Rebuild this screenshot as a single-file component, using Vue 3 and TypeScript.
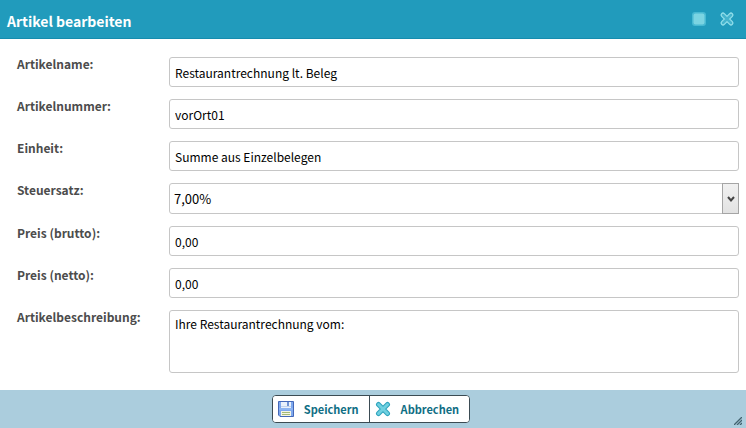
<script setup lang="ts">
import { ref } from 'vue'

interface Field {
  id: string
  label: string
  value: string
  kind: 'text' | 'select' | 'area'
}

const fields = ref<Field[]>([
  { id: 'name', label: 'Artikelname:', value: 'Restaurantrechnung lt. Beleg', kind: 'text' },
  { id: 'nummer', label: 'Artikelnummer:', value: 'vorOrt01', kind: 'text' },
  { id: 'einheit', label: 'Einheit:', value: 'Summe aus Einzelbelegen', kind: 'text' },
  { id: 'steuersatz', label: 'Steuersatz:', value: '7,00%', kind: 'select' },
  { id: 'brutto', label: 'Preis (brutto):', value: '0,00', kind: 'text' },
  { id: 'netto', label: 'Preis (netto):', value: '0,00', kind: 'text' },
  { id: 'beschreibung', label: 'Artikelbeschreibung:', value: 'Ihre Restaurantrechnung vom:', kind: 'area' },
])
</script>

<template>
  <form class="dialog" @submit.prevent>
    <header class="titlebar">
      <h1 class="title">Artikel bearbeiten</h1>
      <button type="button" class="tool" aria-label="Maximieren">
        <svg width="16" height="16" viewBox="0 0 16 16">
          <rect x="1" y="1" width="14" height="14" rx="3" fill="#48b9d2" />
          <rect x="2.5" y="2.5" width="11" height="11" rx="2" fill="#7bd4e2" />
        </svg>
      </button>
      <button type="button" class="tool" aria-label="Schließen">
        <svg width="16" height="16" viewBox="0 0 16 16">
          <path d="M4 4L12 12M12 4L4 12" stroke="#93dfea" stroke-width="5" stroke-linecap="round" />
          <path d="M4 4L12 12M12 4L4 12" stroke="#45b3cd" stroke-width="2.5" stroke-linecap="round" />
        </svg>
      </button>
    </header>

    <main class="fields">
      <div v-for="field in fields" :key="field.id" class="row">
        <label class="label" :for="field.id">{{ field.label }}</label>
        <div v-if="field.kind === 'select'" class="picker">
          <select :id="field.id" v-model="field.value" class="control select">
            <option>7,00%</option>
          </select>
          <span class="arrow" aria-hidden="true">
            <svg width="8" height="8" viewBox="0 0 8 8">
              <path d="M1 2L4 5.5L7 2" fill="none" stroke="#444" stroke-width="2" />
            </svg>
          </span>
        </div>
        <textarea v-else-if="field.kind === 'area'" :id="field.id" v-model="field.value" class="control area"></textarea>
        <input v-else :id="field.id" v-model="field.value" type="text" class="control" />
      </div>
    </main>

    <footer class="footer">
      <div class="actions">
        <button type="submit" class="action">
          <svg width="16" height="16" viewBox="0 0 16 16">
            <path d="M.5 .5H15.5V15.5H2L.5 14Z" fill="#7ea8ee" stroke="#4468b8" />
            <rect x="3" y="1" width="10" height="6" fill="#e9f1fb" />
            <rect x="9" y="1" width="2" height="4" fill="#6f93d4" />
            <path d="M3 5.5H13" stroke="#c3d3ea" />
            <rect x="1" y="7" width="14" height="2" fill="#8cb4f2" />
            <rect x="3" y="10" width="10" height="5" fill="#f3f5e4" />
            <path d="M4 11.5H12M4 13.5H12" stroke="#a4ba78" />
          </svg>
          <span>Speichern</span>
        </button>
        <button type="button" class="action">
          <svg width="16" height="16" viewBox="0 0 16 16">
            <path d="M3.5 3.5L12.5 12.5M12.5 3.5L3.5 12.5" stroke="#2ea3bd" stroke-width="5" stroke-linecap="round" />
            <path d="M3.5 3.5L12.5 12.5M12.5 3.5L3.5 12.5" stroke="#6fd0e0" stroke-width="3" stroke-linecap="round" />
          </svg>
          <span>Abbrechen</span>
        </button>
      </div>
      <svg class="grip" width="8" height="8" viewBox="0 0 8 8" aria-hidden="true">
        <path d="M0 8L8 0M3 8L8 3M6 8L8 6" stroke="#42626f" stroke-width="1.3" />
      </svg>
    </footer>
  </form>
</template>

<style>
body {
  background: #fff;
}
</style>

<style scoped>
.dialog {
  display: flex;
  flex-direction: column;
  min-height: 100vh;
  font-family: "Noto Sans CJK SC", "Noto Sans", sans-serif;
  font-size: 12px;
  line-height: 18px;
}

.dialog * {
  box-sizing: border-box;
}

.titlebar {
  display: flex;
  align-items: center;
  gap: 12px;
  height: 39px;
  padding: 0 11px 0 7px;
  background: #219bbc;
  border-bottom: 1px solid #168cae;
}

.title {
  flex: 1;
  margin: 0;
  padding-top: 4px;
  color: #fff;
  font-size: 14px;
  font-weight: 700;
  line-height: 20px;
}

.tool {
  display: flex;
  padding: 0;
  border: 0;
  background: none;
}

.fields {
  display: flex;
  flex: 1;
  flex-direction: column;
  gap: 12px;
  padding: 18px 7px 16px 17px;
}

.row {
  display: flex;
  align-items: flex-start;
}

.label {
  flex: 0 0 152px;
  margin-top: -2px;
  color: #4c4c4c;
  font-weight: 700;
}

.control {
  display: block;
  flex: 1;
  min-width: 0;
  width: 100%;
  height: 30px;
  margin: 0;
  padding: 0 5px;
  border: 1px solid #c6c6c6;
  border-radius: 3px;
  background: #fff;
  color: #000;
  font: inherit;
}

.picker {
  position: relative;
  display: flex;
  flex: 1;
}

.select {
  height: 31px;
  padding: 0 4px;
  appearance: none;
  font-size: 13px;
}

.arrow {
  position: absolute;
  top: 0;
  right: 0;
  bottom: 0;
  display: flex;
  align-items: center;
  justify-content: center;
  width: 17px;
  border: 1px solid #a5a5a5;
  background: linear-gradient(#f1f1f1, #e2e2e2);
  pointer-events: none;
}

.area {
  height: 63px;
  padding: 4px 5px;
  resize: none;
}

.footer {
  position: relative;
  display: flex;
  justify-content: center;
  height: 38px;
  padding: 5px 8px 5px 4px;
  background: #abcddd;
}

.actions {
  display: flex;
  height: 28px;
  border: 1px solid #3b4b53;
  border-radius: 4px;
  background: #fff;
  overflow: hidden;
}

.action {
  display: flex;
  align-items: center;
  gap: 10px;
  padding: 0 10px 0 5px;
  border: 0;
  background: #fff;
  color: #0f6e84;
  font: inherit;
  font-size: 11px;
  font-weight: 700;
}

.action + .action {
  border-left: 1px solid #3b4b53;
}

.grip {
  position: absolute;
  right: 4px;
  bottom: 3px;
}
</style>
